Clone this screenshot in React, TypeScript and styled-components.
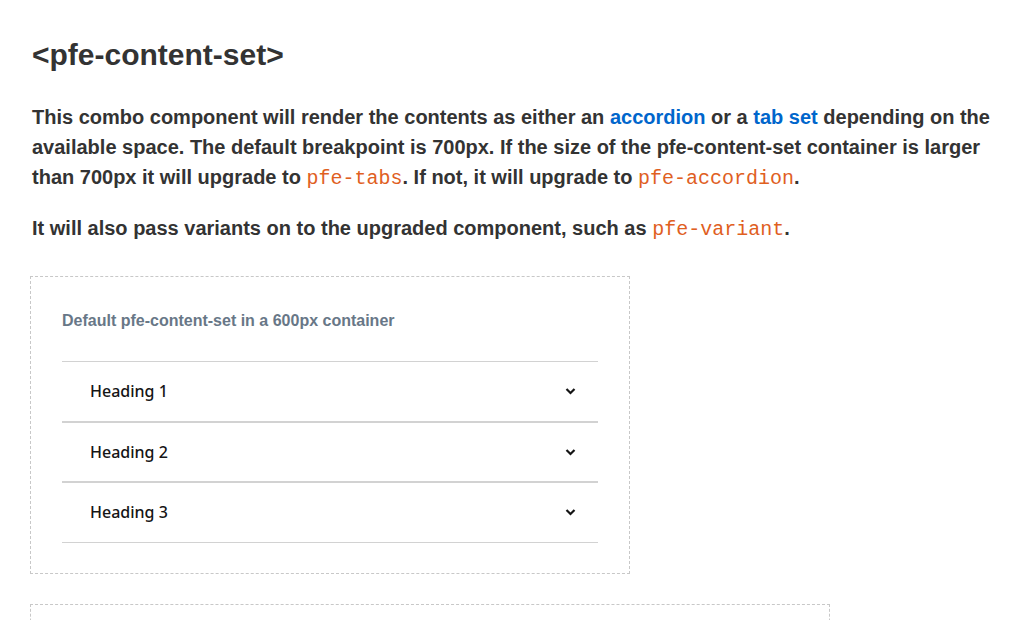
import React from "react";
import styled, { createGlobalStyle } from "styled-components";

const GlobalStyle = createGlobalStyle`
  html, body { margin: 0; padding: 0; background: #fff; }
  body { font-family: "Liberation Sans", Arial, sans-serif; color: #333; }
`;

const Page = styled.main`
  padding: 37px 30px 0 30px;
`;

const Title = styled.h1`
  margin: 0 0 29px 2px;
  font-size: 30px;
  line-height: 36px;
  font-weight: 700;
  color: #333;
`;

const Para = styled.p<{ $after?: number }>`
  margin: 0 0 ${(p) => p.$after ?? 21}px 2px;
  font-size: 20px;
  line-height: 30px;
  font-weight: 700;
  color: #333;
`;

const Link = styled.a`
  color: #0066cc;
  text-decoration: none;
`;

const Code = styled.code`
  font-family: "Liberation Mono", "Courier New", monospace;
  font-weight: 400;
  font-size: 20px;
  line-height: 1;
  color: #e0601f;
`;

const Demo = styled.section<{ $width: number }>`
  box-sizing: border-box;
  width: ${(p) => p.$width}px;
  min-height: 60px;
  border: 1px dashed #c8c8c8;
  padding: 34px 31px 30px 31px;
  margin: 0 0 30px 0;
`;

const Caption = styled.h2`
  margin: 0 0 30px 0;
  font-size: 16px;
  line-height: 20px;
  font-weight: 700;
  color: #687787;
`;

const Accordion = styled.div`
  display: flex;
  flex-direction: column;
`;

const Item = styled.div`
  box-sizing: border-box;
  height: 60.6px;
  border-top: 1px solid #d2d2d2;
  border-bottom: 1px solid #d2d2d2;
  display: flex;
  align-items: center;
  justify-content: space-between;
  padding: 0 22px 0 28px;
`;

const ItemTitle = styled.span`
  font-family: "Noto Sans", sans-serif;
  font-size: 16px;
  font-weight: 500;
  color: #151515;
`;

const Chevron = () => (
  <svg width="11" height="8" viewBox="0 0 11 8" aria-hidden="true">
    <polyline
      points="1.5,2 5.5,6 9.5,2"
      fill="none"
      stroke="#151515"
      strokeWidth="2.2"
    />
  </svg>
);

const headings = ["Heading 1", "Heading 2", "Heading 3"];

export default function App() {
  return (
    <>
      <GlobalStyle />
      <Page>
        <Title>&lt;pfe-content-set&gt;</Title>
        <Para>
          This combo component will render the contents as either an{" "}
          <Link href="#">accordion</Link> or a <Link href="#">tab set</Link>{" "}
          depending on the available space. The default breakpoint is 700px. If
          the size of the pfe-content-set container is larger than 700px it
          will upgrade to <Code>pfe-tabs</Code>. If not, it will upgrade to{" "}
          <Code>pfe-accordion</Code>.
        </Para>
        <Para $after={33}>
          It will also pass variants on to the upgraded component, such as{" "}
          <Code>pfe-variant</Code>.
        </Para>
        <Demo $width={600}>
          <Caption>Default pfe-content-set in a 600px container</Caption>
          <Accordion>
            {headings.map((h) => (
              <Item key={h}>
                <ItemTitle>{h}</ItemTitle>
                <Chevron />
              </Item>
            ))}
          </Accordion>
        </Demo>
        <Demo $width={800} />
      </Page>
    </>
  );
}
